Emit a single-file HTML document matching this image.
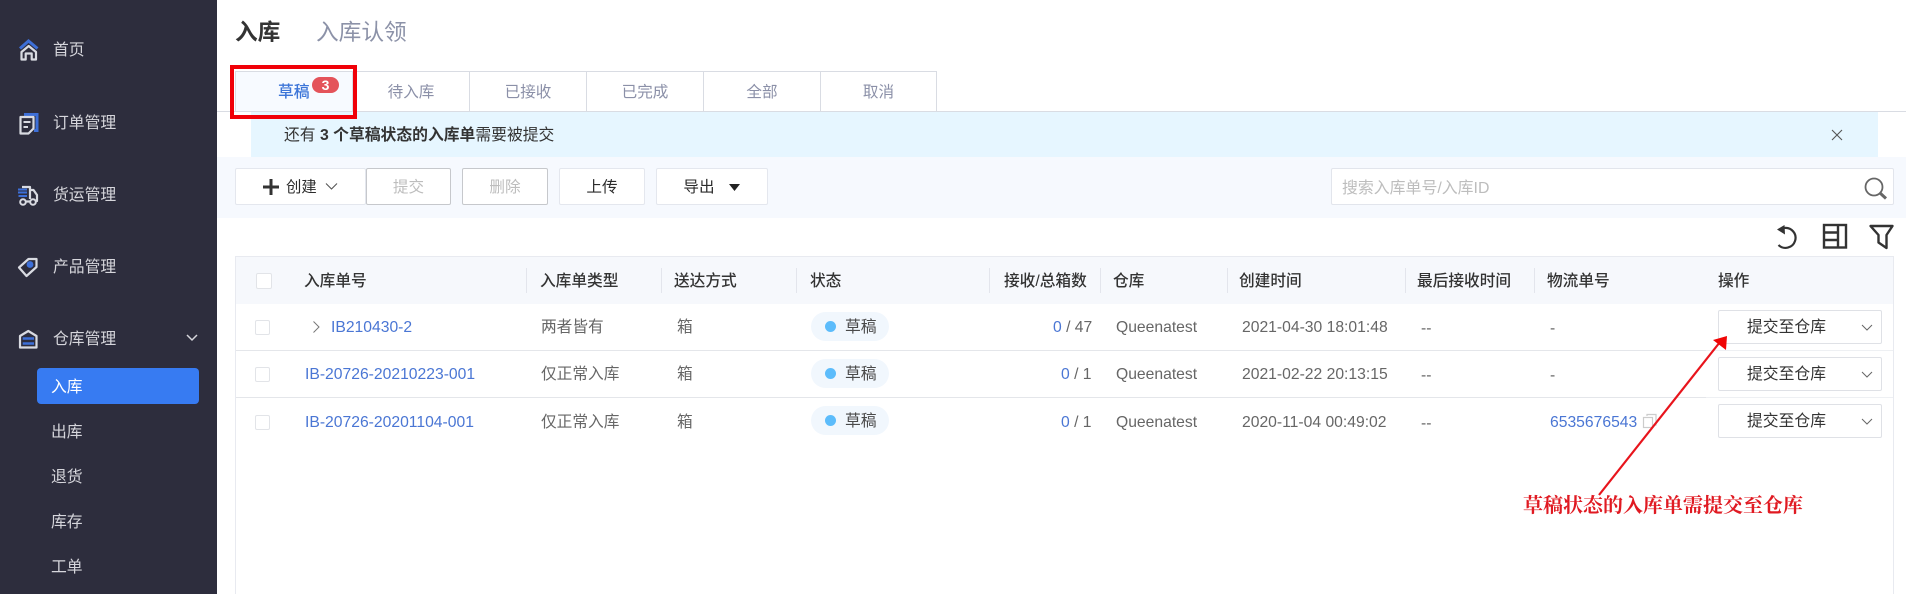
<!DOCTYPE html>
<html lang="zh"><head><meta charset="utf-8"><title>入库</title>
<style>
*{box-sizing:border-box}
html,body{margin:0;padding:0;width:1906px;height:594px;overflow:hidden;background:#fff}
body{position:relative;font-family:"Liberation Sans","Noto Sans CJK SC",sans-serif;font-size:15.6px;color:#333}
.a{position:absolute}
.t{position:absolute;line-height:20px;height:20px;white-space:nowrap;margin-top:2px}
.side{position:absolute;left:0;top:0;width:217px;height:594px;background:#2d2d3d}
.m{color:#d6d6dc;font-size:15.8px;left:53px}
.s{color:#d6d6dc;font-size:15.8px;left:51px;margin-top:3px}
.tab{position:absolute;top:71px;height:40px;border:1px solid #d9dce3;border-bottom:0;border-left:0;color:#8b90a8;font-size:15.6px;line-height:42px;text-align:center;background:#fff}
.btn{position:absolute;top:168px;height:37px;background:#fff;border:1px solid #e4e7ee;border-radius:2px;font-size:15.6px;line-height:38px;text-align:center;color:#2b2b2b}
.dis{border-color:#c6c8cc;color:#bdbdbd}
.h{font-weight:500;color:#333;font-size:15.7px}
.sep{position:absolute;top:268px;width:1px;height:25px;background:#e3e5ec}
.c{color:#666;font-size:15.7px;margin-top:1px}
.l{color:#4a76d4;font-size:15.7px;margin-top:1px}
.cb{position:absolute;width:15px;height:15px;border:1px solid #e2e4e8;border-radius:2px;background:#fff}
.pill{position:absolute;left:811px;width:78px;height:29px;border-radius:15px;background:#f1f7fd}
.dot{position:absolute;left:14px;top:9px;width:11px;height:11px;border-radius:50%;background:#5cbcfb}
.pill b{position:absolute;left:34px;top:6px;font-weight:400;font-size:15.8px;line-height:20px;color:#4a4a4a}
.sel{position:absolute;left:1718px;width:164px;height:34px;background:#fff;border:1px solid #dfe1e6;border-radius:2px;font-size:15.8px;line-height:34px;color:#333;padding-left:28px}
</style></head><body>

<div class="side"></div>
<svg class="a" style="left:0;top:0" width="217" height="594" fill="none">
<!-- home -->
<path d="M21.500 52V59.500H25.700V53.500H31.700V59.500H36V52L28.700 46Z" stroke="#d9dbe2" stroke-width="2.200" stroke-linejoin="round"/>
<path d="M20 48.500L28.500 41L37.500 48.500" stroke="#3d6fd8" stroke-width="3"/>
<!-- order -->
<path d="M24 114.500H37V130.500H34" stroke="#3d6fd8" stroke-width="3"/>
<path d="M20.500 117H33.500V128.500L28.500 133.500H20.500Z" stroke="#d9dbe2" stroke-width="2.200" stroke-linejoin="round" fill="#2d2d3d"/>
<path d="M23.500 122H30.500M23.500 127H28" stroke="#d9dbe2" stroke-width="2"/>
<!-- truck -->
<path d="M22 187H30V199M30 190H33.500L37 195V201H35.500M30 201.500H26" stroke="#d9dbe2" stroke-width="2.200" stroke-linejoin="round"/>
<path d="M18 189.500H27M18 192.500H27M18.500 196H27" stroke="#3d6fd8" stroke-width="2"/>
<circle cx="23" cy="202" r="2.800" stroke="#d9dbe2" stroke-width="2"/><circle cx="33" cy="202" r="2.800" stroke="#d9dbe2" stroke-width="2"/>
<!-- tag -->
<path d="M19 267.500L28.500 259H36.500V267L26.500 276Z" stroke="#d9dbe2" stroke-width="2.200" stroke-linejoin="round"/>
<circle cx="30" cy="264.500" r="3.400" fill="#3d6fd8"/>
<!-- warehouse -->
<path d="M20 336L28.300 331L36.500 336V347.500H20Z" stroke="#d9dbe2" stroke-width="2.200" stroke-linejoin="round"/>
<path d="M22.700 338.500H34M22.700 343.500H34" stroke="#3d6fd8" stroke-width="2.600"/>
<path d="M187 335L192 340L197 335" stroke="#d6d6dc" stroke-width="1.500"/>
</svg>
<div class="t m" style="top:39px">首页</div>
<div class="t m" style="top:112px">订单管理</div>
<div class="t m" style="top:184px">货运管理</div>
<div class="t m" style="top:256px">产品管理</div>
<div class="t m" style="top:328px">仓库管理</div>
<div class="a" style="left:37px;top:368px;width:162px;height:36px;background:#377bf2;border-radius:4px"></div>
<div class="t s" style="top:375px;color:#fff">入库</div>
<div class="t s" style="top:420px">出库</div>
<div class="t s" style="top:465px">退货</div>
<div class="t s" style="top:510px">库存</div>
<div class="t s" style="top:555px">工单</div>

<div class="t" style="left:235px;top:20px;font-size:22.7px;font-weight:700;color:#333">入库</div>
<div class="t" style="left:316px;top:20px;font-size:22.7px;color:#8c92a8">入库认领</div>

<div class="a" style="left:217px;top:111px;width:1689px;height:1px;background:#d9dce3"></div>
<div class="tab" style="left:235px;width:118px;border-left:1px solid #d9dce3;background:#f7faff"></div>
<div class="t" style="left:278px;top:81px;font-size:15.8px;color:#3d75d8;font-weight:500">草稿</div>
<div class="a" style="left:312px;top:77px;width:27px;height:16px;border-radius:8px;background:#e4535a;color:#fff;font-size:14px;font-weight:700;line-height:16px;text-align:center">3</div>
<div class="tab" style="left:353px;width:117px">待入库</div>
<div class="tab" style="left:470px;width:117px">已接收</div>
<div class="tab" style="left:587px;width:117px">已完成</div>
<div class="tab" style="left:704px;width:117px">全部</div>
<div class="tab" style="left:821px;width:116px">取消</div>

<div class="a" style="left:251px;top:112px;width:1627px;height:45px;background:#e6f6ff"></div>
<div class="t" style="left:284px;top:124px;font-size:15.8px;color:#333">还有 <b style="font-weight:700">3 个草稿状态的入库单</b>需要被提交</div>
<svg class="a" style="left:1830px;top:128px" width="14" height="14" fill="none"><path d="M2 2L12 12M12 2L2 12" stroke="#555" stroke-width="1.100"/></svg>

<div class="a" style="left:217px;top:157px;width:1689px;height:61px;background:#f6f9fe"></div>
<div class="btn" style="left:235px;width:131px"></div>
<svg class="a" style="left:262px;top:178px" width="18" height="18"><path d="M9 1V17M1 9H17" stroke="#333" stroke-width="3"/></svg>
<div class="t" style="left:286px;top:176px;color:#2b2b2b;font-size:15.4px">创建</div>
<svg class="a" style="left:325px;top:182px" width="13" height="9" fill="none"><path d="M1 1.500L6.500 7L12 1.500" stroke="#555" stroke-width="1.100"/></svg>
<div class="btn dis" style="left:366px;width:85px">提交</div>
<div class="btn dis" style="left:462px;width:86px">删除</div>
<div class="btn" style="left:559px;width:86px">上传</div>
<div class="btn" style="left:656px;width:112px;padding-right:26px">导出</div>
<svg class="a" style="left:729px;top:184px" width="11" height="7"><path d="M0 0H11L5.500 7Z" fill="#222"/></svg>
<div class="a" style="left:1331px;top:168px;width:563px;height:37px;background:#fff;border:1px solid #e2e5ec;border-radius:2px"></div>
<div class="t" style="left:1342px;top:177px;font-size:15.9px;color:#bdbdbd">搜索入库单号/入库ID</div>
<svg class="a" style="left:1860px;top:174px" width="30" height="27" fill="none"><circle cx="14" cy="13" r="8.500" stroke="#666" stroke-width="1.800"/><path d="M20 19L26 24.500" stroke="#666" stroke-width="3"/></svg>

<svg class="a" style="left:1770px;top:220px" width="130" height="32" fill="none">
<path d="M14 8A10 10 0 1 1 8.500 25" stroke="#333" stroke-width="2.200"/>
<path d="M14.500 5L15 14.500L7 9.500Z" fill="#333"/>
<rect x="54" y="5" width="22" height="22.500" stroke="#333" stroke-width="2.400"/>
<path d="M54 12.500H68M54 20H68M68 5V27.500" stroke="#333" stroke-width="2.400"/>
<path d="M100.500 6H122.500L116.500 15V28L108.500 22.500V15Z" stroke="#333" stroke-width="2.400" stroke-linejoin="round"/>
</svg>

<!-- table -->
<div class="a" style="left:235px;top:256px;width:1659px;height:338px;border:1px solid #e8eaf0;border-bottom:0"></div>
<div class="a" style="left:236px;top:257px;width:1657px;height:47px;background:#f6f8fc"></div>
<div class="a" style="left:236px;top:350px;width:1470px;height:1px;background:#e4e6ea"></div>
<div class="a" style="left:236px;top:397px;width:1470px;height:1px;background:#e4e6ea"></div>
<div class="a" style="left:1706px;top:350px;width:187px;height:1px;background:#eef0f3"></div>
<div class="a" style="left:1706px;top:397px;width:187px;height:1px;background:#eef0f3"></div>
<div class="a" style="left:1706px;top:257px;width:0;height:337px;box-shadow:-2px 0 6px 0 rgba(0,0,0,.05)"></div>

<div class="cb" style="left:256px;top:273px;width:16px;height:16px"></div>
<div class="t h" style="left:304px;top:270px">入库单号</div>
<div class="sep" style="left:526px"></div><div class="t h" style="left:540px;top:270px">入库单类型</div>
<div class="sep" style="left:661px"></div><div class="t h" style="left:674px;top:270px">送达方式</div>
<div class="sep" style="left:796px"></div><div class="t h" style="left:810px;top:270px">状态</div>
<div class="sep" style="left:989px"></div><div class="t h" style="left:1004px;top:270px">接收/总箱数</div>
<div class="sep" style="left:1100px"></div><div class="t h" style="left:1113px;top:270px">仓库</div>
<div class="sep" style="left:1227px"></div><div class="t h" style="left:1239px;top:270px">创建时间</div>
<div class="sep" style="left:1405px"></div><div class="t h" style="left:1417px;top:270px">最后接收时间</div>
<div class="sep" style="left:1534px"></div><div class="t h" style="left:1547px;top:270px">物流单号</div>
<div class="t h" style="left:1718px;top:270px">操作</div>

<!-- row 1 -->
<div class="cb" style="left:255px;top:320px"></div>
<svg class="a" style="left:312px;top:320px" width="9" height="14" fill="none"><path d="M1.500 1.500L7 7L1.500 12.500" stroke="#777" stroke-width="1"/></svg>
<div class="t l" style="left:331px;top:317px">IB210430-2</div>
<div class="t c" style="left:541px;top:317px">两者皆有</div>
<div class="t c" style="left:677px;top:317px">箱</div>
<div class="pill" style="top:312px"><span class="dot"></span><b>草稿</b></div>
<div class="t c" style="left:1053px;top:317px"><span style="color:#4a76d4">0</span> / 47</div>
<div class="t c" style="left:1116px;top:317px">Queenatest</div>
<div class="t c" style="left:1242px;top:317px">2021-04-30 18:01:48</div>
<div class="t c" style="left:1421px;top:318px">--</div>
<div class="t c" style="left:1550px;top:318px">-</div>
<div class="sel" style="top:310px">提交至仓库</div>

<!-- row 2 -->
<div class="cb" style="left:255px;top:367px"></div>
<div class="t l" style="left:305px;top:364px">IB-20726-20210223-001</div>
<div class="t c" style="left:541px;top:364px">仅正常入库</div>
<div class="t c" style="left:677px;top:364px">箱</div>
<div class="pill" style="top:359px"><span class="dot"></span><b>草稿</b></div>
<div class="t c" style="left:1061px;top:364px"><span style="color:#4a76d4">0</span> / 1</div>
<div class="t c" style="left:1116px;top:364px">Queenatest</div>
<div class="t c" style="left:1242px;top:364px">2021-02-22 20:13:15</div>
<div class="t c" style="left:1421px;top:365px">--</div>
<div class="t c" style="left:1550px;top:365px">-</div>
<div class="sel" style="top:357px">提交至仓库</div>

<!-- row 3 -->
<div class="cb" style="left:255px;top:415px"></div>
<div class="t l" style="left:305px;top:412px">IB-20726-20201104-001</div>
<div class="t c" style="left:541px;top:412px">仅正常入库</div>
<div class="t c" style="left:677px;top:412px">箱</div>
<div class="pill" style="top:406px"><span class="dot"></span><b>草稿</b></div>
<div class="t c" style="left:1061px;top:412px"><span style="color:#4a76d4">0</span> / 1</div>
<div class="t c" style="left:1116px;top:412px">Queenatest</div>
<div class="t c" style="left:1242px;top:412px">2020-11-04 00:49:02</div>
<div class="t c" style="left:1421px;top:413px">--</div>
<div class="t l" style="left:1550px;top:412px">6535676543</div>
<svg class="a" style="left:1642px;top:413px" width="16" height="16" fill="none"><path d="M5 3V1.500H14V12H11.500" stroke="#ccc" stroke-width="1.200"/><rect x="1.500" y="4.500" width="9" height="10" stroke="#ccc" stroke-width="1.200"/></svg>
<div class="sel" style="top:404px">提交至仓库</div>

<svg class="a" style="left:1855px;top:310px" width="24" height="130" fill="none">
<path d="M7 15L12 20L17 15M7 62L12 67L17 62M7 109L12 114L17 109" stroke="#666" stroke-width="1"/>
</svg>

<!-- annotation -->
<svg class="a" style="left:0;top:0" width="1906" height="594" fill="none">
<path d="M1599 495L1720 342" stroke="#e8141c" stroke-width="2.200"/>
<path d="M1727 336L1713 340L1726 350Z" fill="#f00505"/>
<rect x="232" y="67" width="123" height="50" stroke="#f00008" stroke-width="4"/>
</svg>
<div class="t" style="left:1523px;top:494px;font-family:'Liberation Serif','Noto Serif CJK SC',serif;font-size:20px;font-weight:700;color:#e01a22">草稿状态的入库单需提交至仓库</div>
</body></html>
